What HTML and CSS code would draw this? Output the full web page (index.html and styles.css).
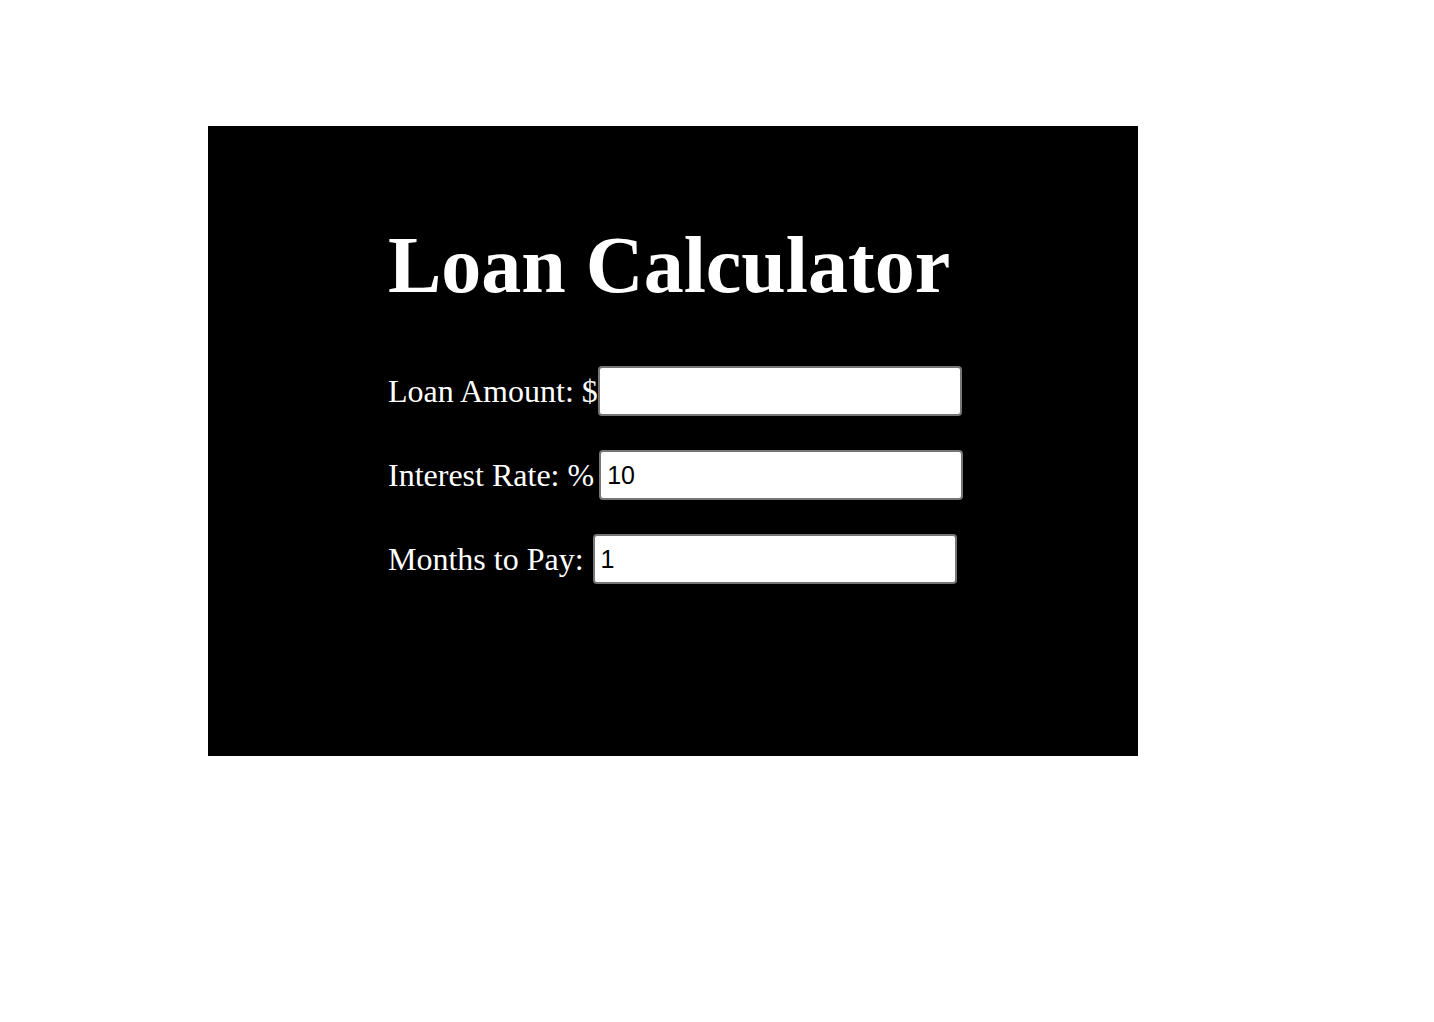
FILE: index.html
```html
<!DOCTYPE html>
<html lang="en">
<head>
    <meta charset="UTF-8">
    <title>Loan Calculator</title>
    <link rel="stylesheet" href="styles.css">
</head>
<body>
    <div id="calculator">
        <h1 class="title">Loan Calculator</h1>
        <div class="row">
            <label for="amount">Loan Amount: $</label><input id="amount" type="text" value="">
        </div>
        <div class="row">
            <label for="rate">Interest Rate: %</label><input id="rate" class="gap" type="text" value="10">
        </div>
        <div class="row">
            <label for="months">Months to Pay:</label><input id="months" class="gap-space" type="text" value="1">
        </div>
    </div>
</body>
</html>
```

FILE: styles.css
```css
*{
    padding:0;
    margin:0;
    box-sizing:border-box;
}
body{
    font-family:"Liberation Serif","Times New Roman",serif;
    background:#fff;
    padding:126px 0 0 208px;
}
#calculator{
    width:930px;
    height:630px;
    background:#000;
    color:#fff;
    padding:94px 0 0 180px;
}
.title{
    font-size:80px;
    font-weight:bold;
    line-height:normal;
    margin-bottom:55px;
}
.row{
    display:flex;
    align-items:center;
    height:50px;
    margin-bottom:34px;
    font-size:32px;
}
.row input{
    width:364px;
    height:50px;
    border:2px solid #767676;
    border-radius:4px;
    background:#fff;
    color:#000;
    font-family:"Liberation Sans",Arial,sans-serif;
    font-size:25px;
    padding:0 6px;
    outline:none;
}
.row .gap{
    margin-left:5px;
}
.row .gap-space{
    margin-left:9px;
}
```
